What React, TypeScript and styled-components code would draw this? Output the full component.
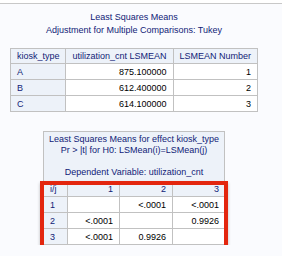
import React from "react";
import styled, { createGlobalStyle } from "styled-components";

const Global = createGlobalStyle`
  html, body { margin: 0; padding: 0; background: #fafbfe; }
  body { font-family: "Liberation Sans", Arial, sans-serif; }
`;

const TopBar = styled.div`
  height: 3px;
  background: #ffffff;
  border-bottom: 1px solid #c8c8c8;
`;

const Page = styled.div`
  width: 268px;
  display: flex;
  flex-direction: column;
  align-items: center;
`;

const Title = styled.div`
  margin-top: 7px;
  font-size: 9px;
  line-height: 13px;
  color: #112277;
  text-align: center;
`;

const Table = styled.table<{ $mt?: number }>`
  border-collapse: collapse;
  font-size: 9px;
  table-layout: fixed;
  margin-top: ${(p) => p.$mt ?? 0}px;
`;

const Th = styled.th<{ $w?: number; $align?: string }>`
  width: ${(p) => (p.$w ? `${p.$w - 13}px` : "auto")};
  height: 14px;
  padding: 0 6px;
  border: 1px solid #c1c1c1;
  background: #edf2f9;
  color: #112277;
  font-weight: normal;
  text-align: ${(p) => p.$align ?? "left"};
  white-space: nowrap;
`;

const Td = styled.td`
  height: 15px;
  padding: 0 6px;
  border: 1px solid #c1c1c1;
  background: #ffffff;
  color: #000000;
  text-align: right;
  white-space: nowrap;
`;

const Block = styled.div`
  margin-top: 19px;
  display: flex;
  flex-direction: column;
  width: 182px;
`;

const BoxTitle = styled.div`
  border: 1px solid #c1c1c1;
  border-bottom: none;
  background: #edf2f9;
  color: #112277;
  font-size: 9px;
  line-height: 11px;
  text-align: center;
  padding: 2px 0 3px;
`;

const GridWrap = styled.div`
  position: relative;
`;

const Highlight = styled.div`
  position: absolute;
  left: -3px;
  right: -3px;
  top: 0;
  bottom: -6px;
  border: 4px solid #e3260e;
  box-shadow: 0 2px 3px rgba(0, 0, 0, 0.25);
  pointer-events: none;
`;

const GridTable = styled(Table)`
  width: 182px;
`;

const rows1 = [
  ["A", "875.100000", "1"],
  ["B", "612.400000", "2"],
  ["C", "614.100000", "3"],
];

const rows2 = [
  ["1", "", "<.0001", "<.0001"],
  ["2", "<.0001", "", "0.9926"],
  ["3", "<.0001", "0.9926", ""],
];

export default function App() {
  return (
    <>
      <Global />
      <TopBar />
      <Page>
        <Title>
          Least Squares Means
          <br />
          Adjustment for Multiple Comparisons: Tukey
        </Title>
        <Table $mt={11}>
          <thead>
            <tr>
              <Th $w={54}>kiosk_type</Th>
              <Th $w={106} $align="right">utilization_cnt LSMEAN</Th>
              <Th $w={84} $align="right">LSMEAN Number</Th>
            </tr>
          </thead>
          <tbody>
            {rows1.map((r) => (
              <tr key={r[0]}>
                <Th>{r[0]}</Th>
                <Td>{r[1]}</Td>
                <Td>{r[2]}</Td>
              </tr>
            ))}
          </tbody>
        </Table>
        <Block>
          <BoxTitle>
            Least Squares Means for effect kiosk_type
            <br />
            Pr &gt; |t| for H0: LSMean(i)=LSMean(j)
            <br />
            &nbsp;
            <br />
            Dependent Variable: utilization_cnt
          </BoxTitle>
          <GridWrap>
            <GridTable>
              <thead>
                <tr>
                  <Th $w={24}>i/j</Th>
                  <Th $w={52} $align="right">1</Th>
                  <Th $w={53} $align="right">2</Th>
                  <Th $w={53} $align="right">3</Th>
                </tr>
              </thead>
              <tbody>
                {rows2.map((r) => (
                  <tr key={r[0]}>
                    <Th>{r[0]}</Th>
                    <Td>{r[1]}</Td>
                    <Td>{r[2]}</Td>
                    <Td>{r[3]}</Td>
                  </tr>
                ))}
              </tbody>
            </GridTable>
            <Highlight />
          </GridWrap>
        </Block>
      </Page>
    </>
  );
}
